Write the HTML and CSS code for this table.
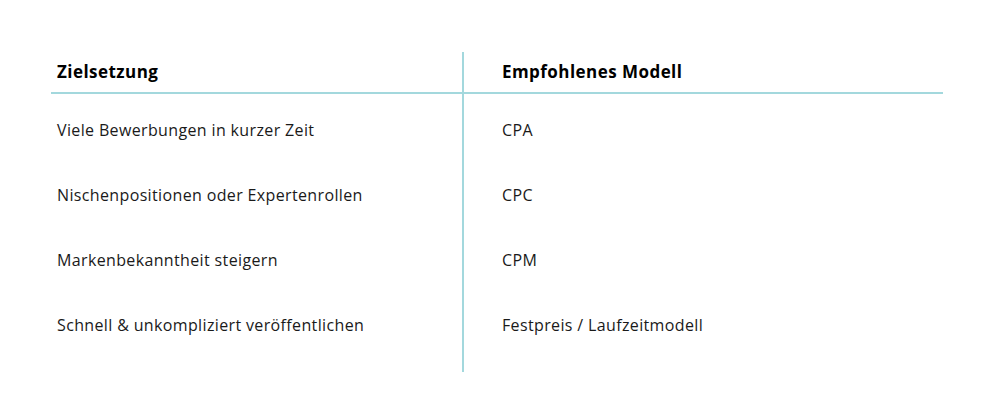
FILE: index.html
```html
<!DOCTYPE html>
<html lang="de">
<head>
<meta charset="utf-8">
<link rel="stylesheet" href="styles.css">
</head>
<body>
<div class="page">
  <div class="table">
    <div class="cell head left">Zielsetzung</div>
    <div class="cell head right">Empfohlenes Modell</div>
    <div class="cell body left">Viele Bewerbungen in kurzer Zeit</div>
    <div class="cell body right">CPA</div>
    <div class="cell body left">Nischenpositionen oder Expertenrollen</div>
    <div class="cell body right">CPC</div>
    <div class="cell body left">Markenbekanntheit steigern</div>
    <div class="cell body right">CPM</div>
    <div class="cell body left last">Schnell &amp; unkompliziert veröffentlichen</div>
    <div class="cell body right last">Festpreis / Laufzeitmodell</div>
  </div>
</div>
</body>
</html>
```
FILE: styles.css
```css
html, body {
  margin: 0;
  padding: 0;
  background: #ffffff;
}
.page {
  padding: 52px 0 0 51px;
  font-family: "Open Sans", "Liberation Sans", sans-serif;
  color: #1a1a1a;
  font-size: 16px;
  letter-spacing: 0.36px;
}
.table {
  display: grid;
  grid-template-columns: 413px 479px;
}
.cell {
  box-sizing: border-box;
  line-height: 20px;
  white-space: nowrap;
}
.left {
  border-right: 2px solid #a3d8dd;
  padding-left: 6px;
}
.right {
  padding-left: 38px;
}
.head {
  height: 42px;
  padding-top: 10px;
  border-bottom: 2px solid #a3d8dd;
  font-weight: 700;
  font-size: 17px;
  letter-spacing: 0.45px;
  color: #000000;
}
.body {
  height: 65px;
  padding-top: 26px;
}
.body.last {
  height: 83px;
}
```
